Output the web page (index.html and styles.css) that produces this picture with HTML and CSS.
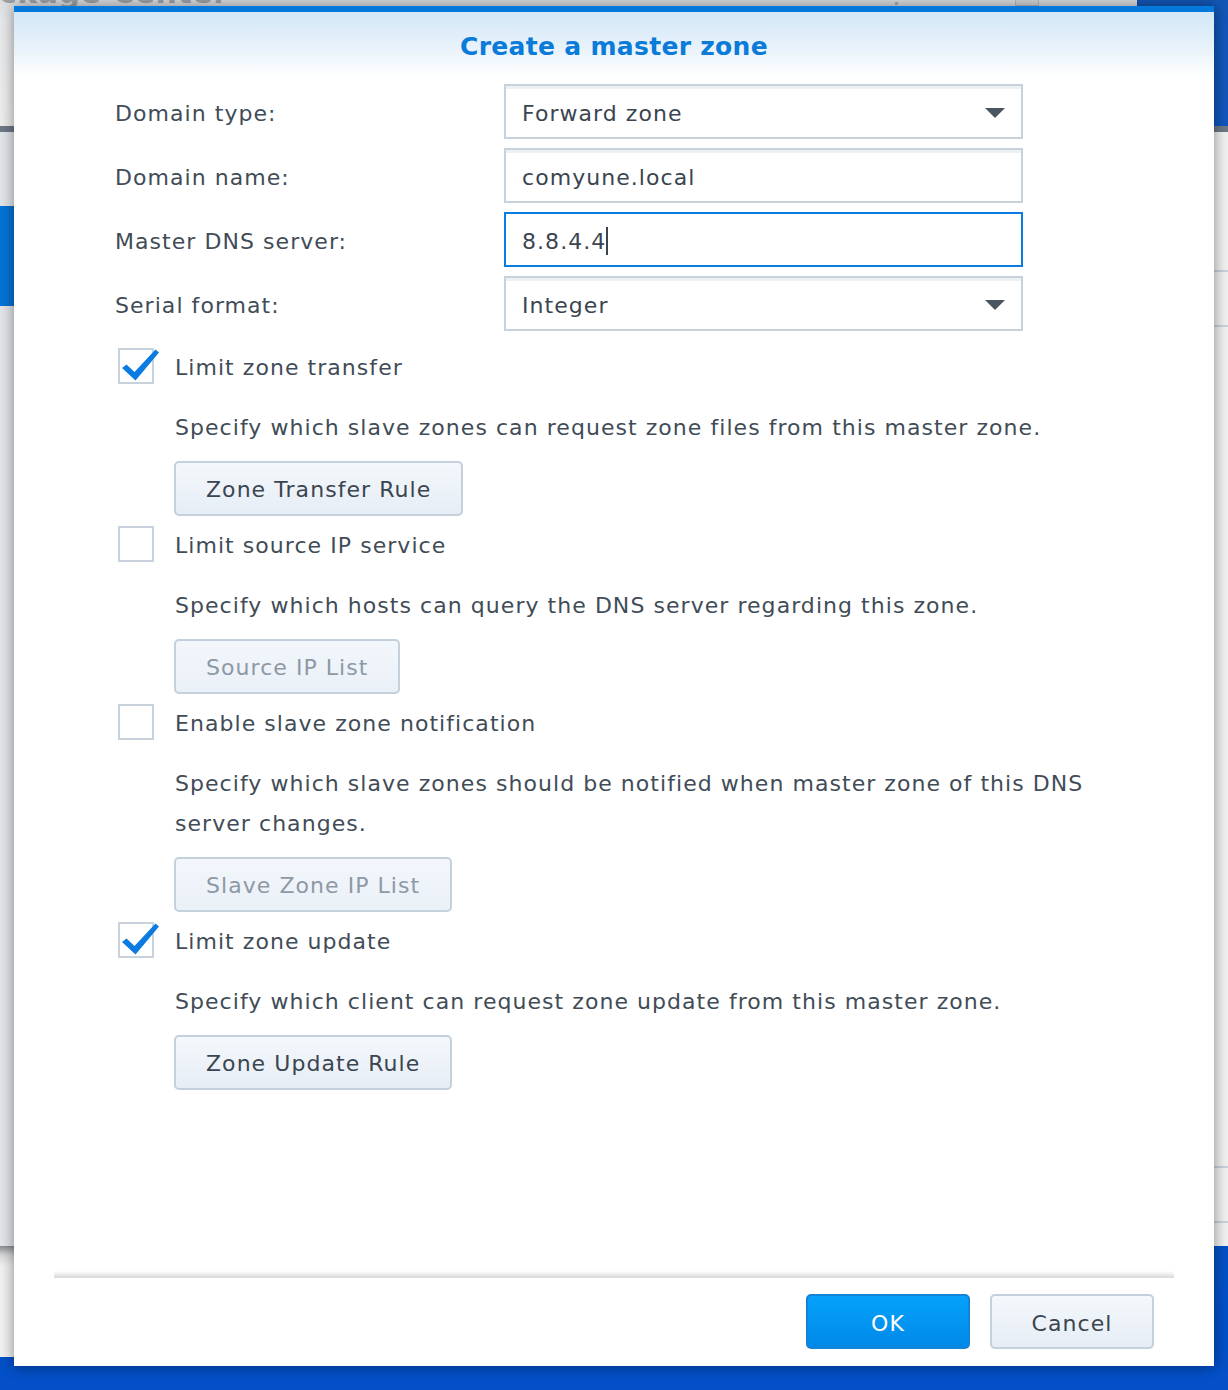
FILE: index.html
```html
<!DOCTYPE html>
<html>
<head>
<meta charset="utf-8">
<link rel="stylesheet" href="styles.css">
</head>
<body>
<div class="desktop">
  <div class="win-pkg">
    <div class="pkg-title">ckage Center</div>
    <div class="pkg-dot"></div>
    <div class="pkg-min"></div>
    <div class="pkg-close"></div>
  </div>
  <div class="win-dns">
    <div class="dns-toolbar"></div>
    <div class="dns-body">
      <div class="dns-sel"></div>
      <div class="dns-line dl1"></div>
      <div class="dns-line dl2"></div>
      <div class="dns-line dl3"></div>
      <div class="dns-line dl4"></div>
    </div>
  </div>
  <div class="win-low"></div>

  <div class="dialog">
    <div class="dlg-header">
      <div class="dlg-title">Create a master zone</div>
    </div>

    <div class="form">
      <div class="label">Domain type:</div>
      <div class="field"><span class="value">Forward zone</span><span class="caret"></span></div>

      <div class="label">Domain name:</div>
      <div class="field"><span class="value">comyune.local</span></div>

      <div class="label">Master DNS server:</div>
      <div class="field focused"><span class="value">8.8.4.4</span><span class="cursor"></span></div>

      <div class="label">Serial format:</div>
      <div class="field"><span class="value">Integer</span><span class="caret"></span></div>
    </div>

    <div class="options">
      <div class="opt">
        <div class="opt-row">
          <div class="box checked">
            <svg class="tick" width="44" height="36" viewBox="0 0 44 36"><path d="M4 20 L8.5 16.5 L16.5 24 L37.5 1.5 L41 4.5 L17.5 32.5 Z" fill="#0a7be0"/></svg>
          </div>
          <div class="opt-label">Limit zone transfer</div>
        </div>
        <div class="desc">Specify which slave zones can request zone files from this master zone.</div>
        <div class="btn">Zone Transfer Rule</div>
      </div>

      <div class="opt">
        <div class="opt-row">
          <div class="box"></div>
          <div class="opt-label">Limit source IP service</div>
        </div>
        <div class="desc">Specify which hosts can query the DNS server regarding this zone.</div>
        <div class="btn disabled">Source IP List</div>
      </div>

      <div class="opt">
        <div class="opt-row">
          <div class="box"></div>
          <div class="opt-label">Enable slave zone notification</div>
        </div>
        <div class="desc">Specify which slave zones should be notified when master zone of this DNS server changes.</div>
        <div class="btn disabled">Slave Zone IP List</div>
      </div>

      <div class="opt">
        <div class="opt-row">
          <div class="box checked">
            <svg class="tick" width="44" height="36" viewBox="0 0 44 36"><path d="M4 20 L8.5 16.5 L16.5 24 L37.5 1.5 L41 4.5 L17.5 32.5 Z" fill="#0a7be0"/></svg>
          </div>
          <div class="opt-label">Limit zone update</div>
        </div>
        <div class="desc">Specify which client can request zone update from this master zone.</div>
        <div class="btn">Zone Update Rule</div>
      </div>
    </div>

    <div class="footer">
      <div class="sep"></div>
      <div class="actions">
        <div class="abtn ok">OK</div>
        <div class="abtn cancel">Cancel</div>
      </div>
    </div>
  </div>
</div>
</body>
</html>
```

FILE: styles.css
```css
html, body {
  margin: 0;
  padding: 0;
}
body {
  width: 1228px;
  height: 1390px;
  overflow: hidden;
  font-family: "DejaVu Sans", Verdana, sans-serif;
}
.desktop {
  position: relative;
  width: 1228px;
  height: 1390px;
  overflow: hidden;
  background: linear-gradient(180deg, #1257b8 0%, #0654c6 60%, #0350c8 100%);
}

/* background windows */
.win-pkg {
  position: absolute;
  left: 0;
  top: 0;
  width: 1137px;
  height: 126px;
  background: linear-gradient(180deg, #dcdde0 0, #e8e9eb 20px, #eeeeee 100%);
}
.pkg-title {
  position: absolute;
  left: -1px;
  top: -25px;
  font-size: 30px;
  font-weight: bold;
  color: #9ea3a8;
  letter-spacing: 0.5px;
}
.pkg-dot {
  position: absolute;
  left: 895px;
  top: 2px;
  width: 3px;
  height: 3px;
  background: #aab0b6;
}
.pkg-min {
  position: absolute;
  left: 1015px;
  top: 0;
  width: 22px;
  height: 5px;
  border: 1px solid #b9bec3;
  border-top: none;
  background: #d4d7da;
}
.pkg-close {
  position: absolute;
  left: 1080px;
  top: -14px;
  width: 18px;
  height: 18px;
  border-left: 2px solid #b9bec3;
  border-top: 2px solid #b9bec3;
  transform: rotate(45deg);
}
.win-dns {
  position: absolute;
  left: -40px;
  top: 126px;
  width: 1320px;
  height: 1120px;
  display: flex;
  flex-direction: column;
}
.dns-toolbar {
  height: 6px;
  background: #6c7986;
}
.dns-body {
  position: relative;
  flex: 1;
  background: linear-gradient(90deg, #e2e6ea 0, #f3f3f3 100%);
}
.dns-sel {
  position: absolute;
  left: 0;
  top: 74px;
  width: 200px;
  height: 100px;
  background: #0474d8;
}
.dns-line {
  position: absolute;
  left: 1240px;
  width: 80px;
  height: 2px;
  background: #c9d4de;
}
.dl1 { top: 138px; }
.dl2 { top: 193px; }
.dl3 { top: 1034px; }
.dl4 { top: 1089px; }
.win-low {
  position: absolute;
  left: 0;
  top: 1246px;
  width: 60px;
  height: 111px;
  background: linear-gradient(180deg, #8a8d90 0, #d6d7d8 9px, #f2f2f2 20px, #f2f2f2 100%);
}

/* dialog */
.dialog {
  position: absolute;
  left: 14px;
  top: 6px;
  width: 1200px;
  height: 1360px;
  box-sizing: border-box;
  border-top: 6px solid #0479dc;
  background: #ffffff;
  box-shadow: 0 0 14px rgba(0, 0, 0, 0.45);
  display: flex;
  flex-direction: column;
  color: #414c57;
  letter-spacing: 1.05px;
}
.dlg-header {
  height: 72px;
  box-sizing: border-box;
  padding-top: 20px;
  background: linear-gradient(180deg, #d2e7f7 0%, #e6f1fa 45%, #ffffff 92%);
  text-align: center;
}
.dlg-title {
  font-size: 25px;
  line-height: 30px;
  font-weight: bold;
  color: #0a7bd8;
  letter-spacing: 0.3px;
}

.form {
  display: grid;
  grid-template-columns: 389px 519px;
  grid-auto-rows: 55px;
  row-gap: 9px;
  padding-left: 101px;
}
.label {
  display: flex;
  align-items: center;
  font-size: 22px;
  padding-top: 3px;
}
.field {
  display: flex;
  align-items: center;
  box-sizing: border-box;
  height: 55px;
  border: 2px solid #c8d2dc;
  box-shadow: inset 0 3px 0 #eef1f4;
  padding: 3px 16px 0 16px;
  font-size: 22px;
  color: #3a4550;
}
.field.focused {
  border-color: #0a7be0;
  box-shadow: none;
}
.caret {
  margin-left: auto;
  width: 0;
  height: 0;
  border-left: 10px solid transparent;
  border-right: 10px solid transparent;
  border-top: 10px solid #4a5560;
}
.cursor {
  display: inline-block;
  width: 2px;
  height: 28px;
  background: #3a4550;
  margin-left: 0;
}

.options {
  margin-top: 17px;
  padding-left: 104px;
}
.opt + .opt {
  margin-top: 10px;
}
.opt-row {
  display: flex;
  align-items: center;
  height: 36px;
  gap: 21px;
}
.box {
  position: relative;
  width: 36px;
  height: 36px;
  box-sizing: border-box;
  border: 2px solid #c8d2dc;
  background: #fff;
  flex: none;
}
.tick {
  position: absolute;
  left: -2px;
  top: -2px;
}
.opt-label {
  font-size: 22px;
  padding-top: 2px;
}
.desc {
  margin-top: 22px;
  padding-left: 57px;
  width: 935px;
  font-size: 22px;
  line-height: 40px;
  padding-top: 2px;
  margin-bottom: -2px;
}
.btn {
  display: inline-flex;
  align-items: center;
  justify-content: center;
  box-sizing: border-box;
  height: 55px;
  margin-top: 15px;
  margin-left: 56px;
  padding: 2px 30px 0 30px;
  border: 2px solid #c4d0dc;
  border-radius: 5px;
  background: linear-gradient(180deg, #f4f8fc 0%, #e6edf5 100%);
  font-size: 22px;
  color: #3a4550;
}
.btn.disabled {
  color: #8d99a5;
  background: linear-gradient(180deg, #f3f7fc 0%, #eaf0f7 100%);
}

.footer {
  margin-top: auto;
  padding-bottom: 17px;
}
.sep {
  margin: 0 40px;
  height: 7px;
  background: linear-gradient(180deg, rgba(245, 245, 245, 0) 0%, #ececec 50%, #e2e2e2 70%, #dadada 100%);
}
.actions {
  display: flex;
  justify-content: flex-end;
  gap: 20px;
  padding-right: 60px;
  margin-top: 16px;
}
.abtn {
  display: flex;
  align-items: center;
  justify-content: center;
  box-sizing: border-box;
  width: 164px;
  height: 55px;
  padding-top: 3px;
  border-radius: 5px;
  font-size: 22px;
}
.abtn.ok {
  background: linear-gradient(180deg, #05a1fa 0%, #0089e8 100%);
  border: 2px solid #1383d8;
  color: #ffffff;
}
.abtn.cancel {
  background: linear-gradient(180deg, #f4f8fc 0%, #e6edf5 100%);
  border: 2px solid #c4d0dc;
  color: #3a4550;
}
```
